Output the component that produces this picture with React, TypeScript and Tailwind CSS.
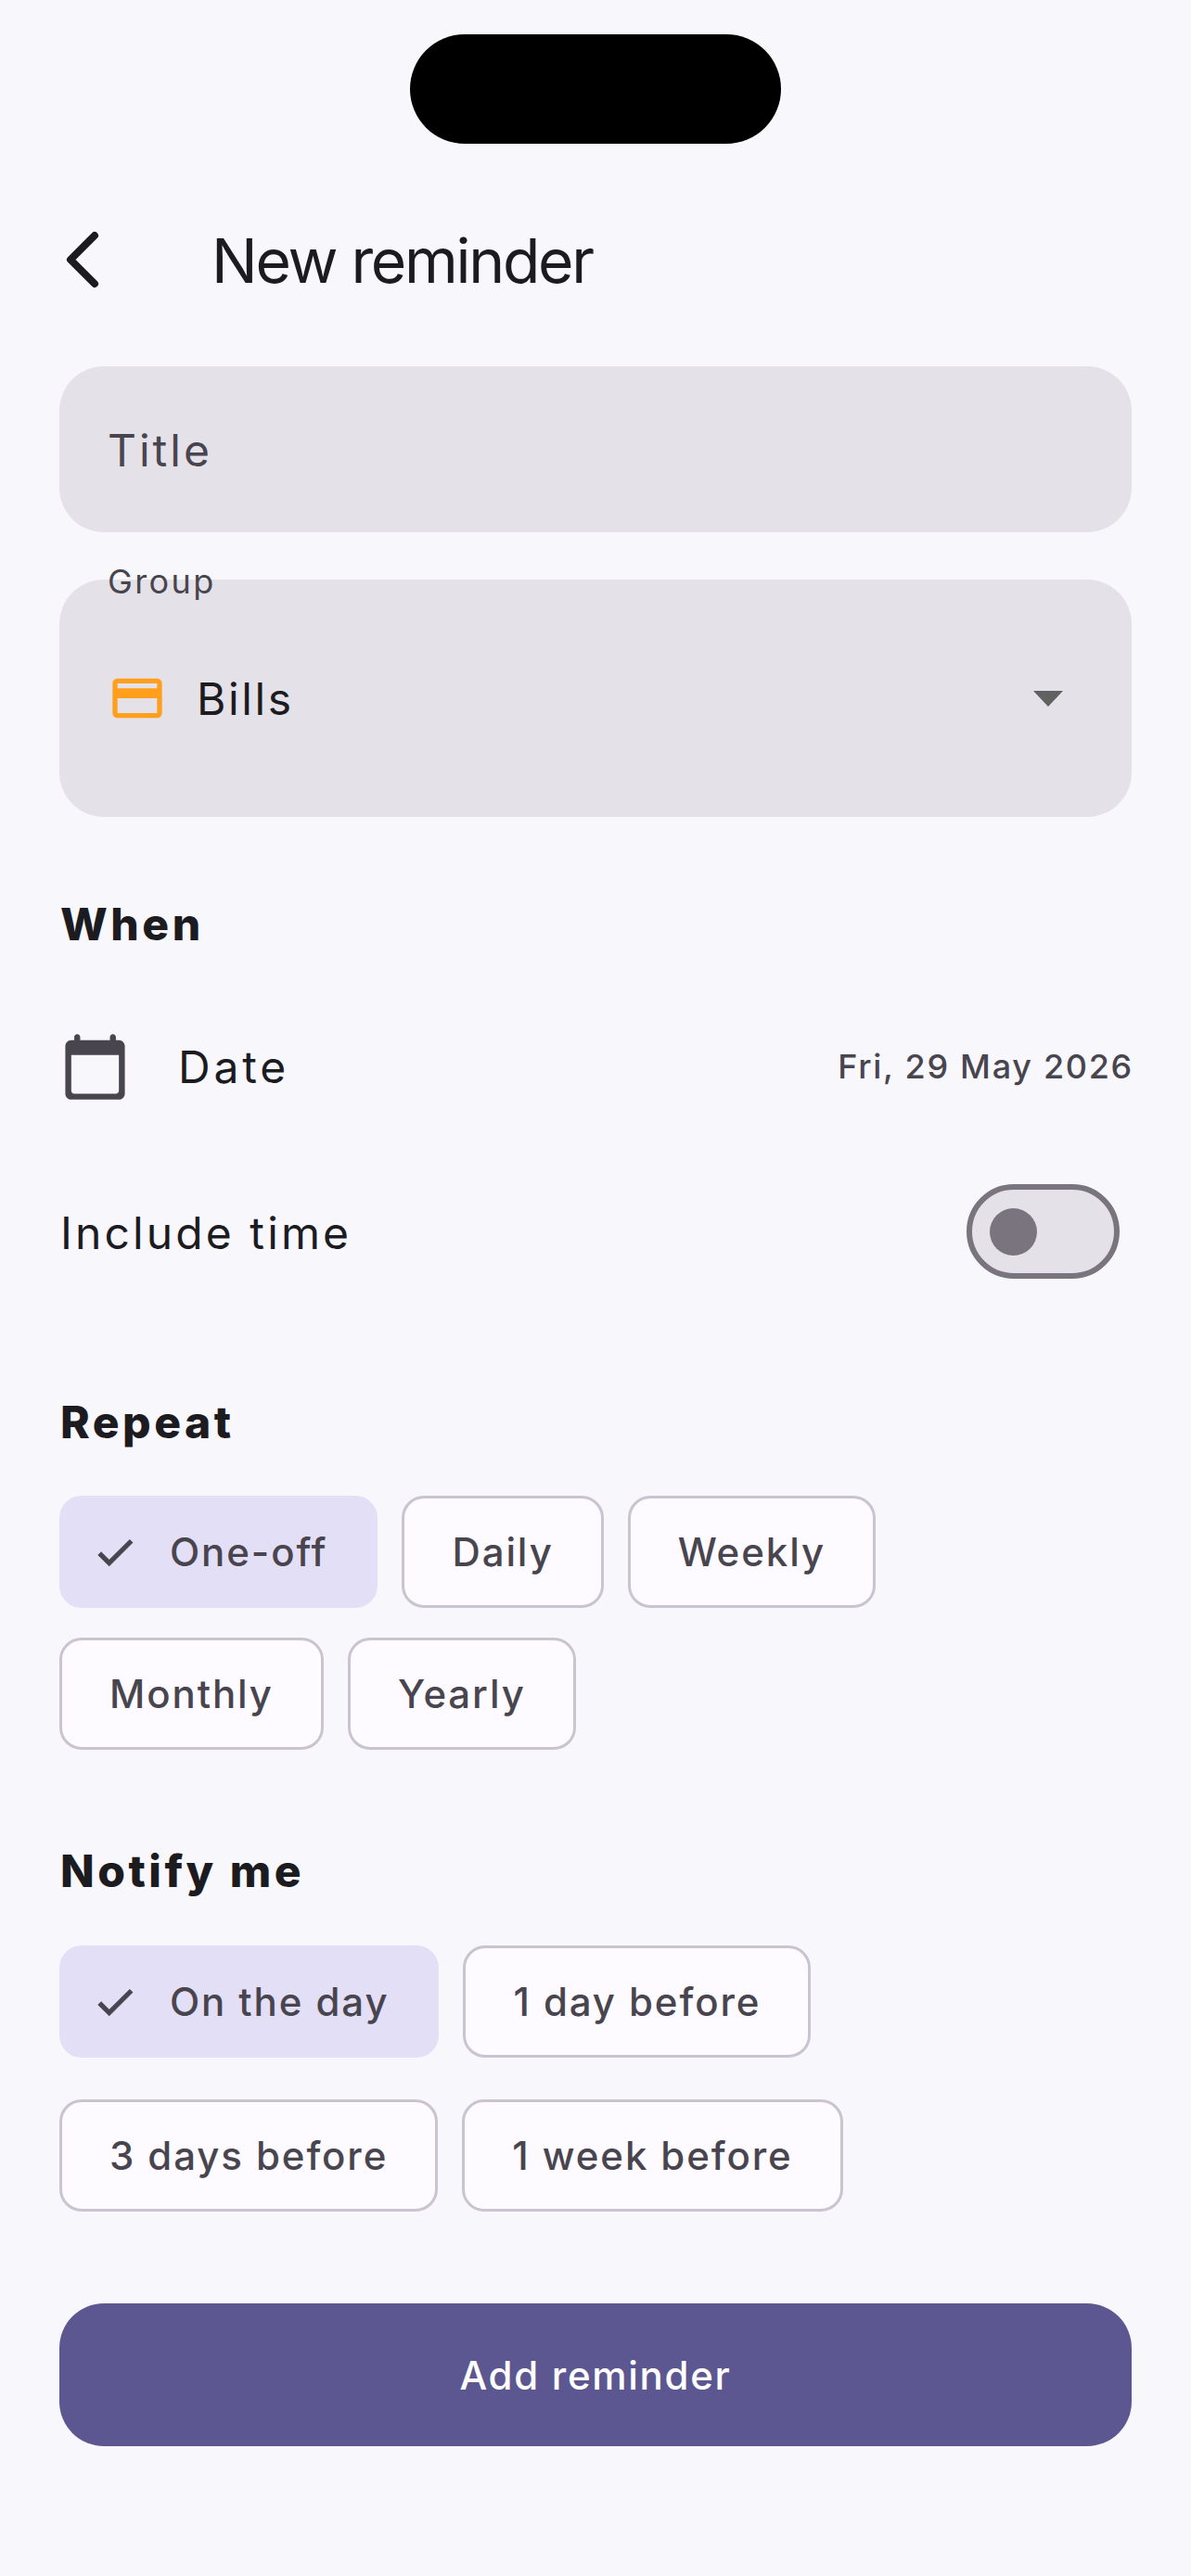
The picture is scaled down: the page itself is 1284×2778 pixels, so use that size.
import React from 'react';

const FONT = "font-['Inter','Noto_Sans',sans-serif]";

const CheckIcon = () => (
  <svg viewBox="0 0 24 24" className="w-[50px] h-[50px] fill-[#49454f] stroke-[#49454f] stroke-[0.5px] shrink-0">
    <path d="M9 16.17L4.83 12l-1.42 1.41L9 19 21 7l-1.41-1.41z" />
  </svg>
);

const Chip = ({ label, selected }: { label: string; selected?: boolean }) => {
  if (selected) {
    return (
      <div className="h-[121px] flex items-center pl-[35px] pr-[54px] rounded-[24px] bg-[#e3dff7]">
        <CheckIcon />
        <span className="ml-[34px] text-[42px] font-[450] tracking-[1.9px] text-[#49454f]">{label}</span>
      </div>
    );
  }
  return (
    <div className="h-[121px] flex items-center px-[51px] rounded-[24px] border-[3px] border-[#cac4d0] bg-[#fdfbff]">
      <span className="text-[42px] font-[450] tracking-[1.9px] text-[#49454f]">{label}</span>
    </div>
  );
};

const SectionTitle = ({ children, className }: { children: React.ReactNode; className: string }) => (
  <h2 className={`h-[58px] flex items-center pl-[1px] text-[48px] font-extrabold tracking-[3.5px] text-[#1c1b1f] ${className}`}>{children}</h2>
);

export default function App() {
  return (
    <div className={`${FONT} w-[1284px] h-[2778px] bg-[#f8f7fc] overflow-hidden`}>
      <div className="pt-[37px] flex justify-center">
        <div className="w-[400px] h-[118px] bg-black rounded-[59px]" />
      </div>

      <div className="px-[64px]">
        <div className="mt-[75px] h-[100px] flex items-center">
          <svg viewBox="0 0 36 62" className="w-[36px] h-[62px] ml-[7px] shrink-0" fill="none" stroke="#1c1b1f" strokeWidth="8" strokeLinecap="round" strokeLinejoin="round">
            <path d="M31 5L5 31l26 26" />
          </svg>
          <h1 className="ml-[121px] mt-[3px] text-[66px] font-normal tracking-[-2.3px] text-[#1c1b1f]">New reminder</h1>
        </div>

        <div className="mt-[65px] h-[179px] flex items-center px-[52px] rounded-[48px] bg-[#e4e1e8]">
          <span className="mt-[3px] text-[48px] tracking-[3px] text-[#49454f]">Title</span>
        </div>

        <div className="relative mt-[51px] h-[256px] flex items-center pl-[56px] pr-[74px] rounded-[48px] bg-[#e4e1e8]">
          <span className="absolute left-[52px] top-[-20px] text-[36px] leading-[44px] tracking-[2.4px] text-[#49454f]">Group</span>
          <svg viewBox="0 0 24 24" className="w-[64px] h-[64px] ml-[-4px] fill-[#ff9f1c] shrink-0">
            <path d="M20 4H4c-1.11 0-1.99.89-1.99 2L2 18c0 1.11.89 2 2 2h16c1.11 0 2-.89 2-2V6c0-1.11-.89-2-2-2zm0 14H4v-6h16v6zm0-10H4V6h16v2z" />
          </svg>
          <span className="ml-[32px] mt-[2px] text-[48px] tracking-[2.6px] text-[#1c1b1f]">Bills</span>
          <svg viewBox="0 0 32 17" className="ml-auto w-[32px] h-[17px] fill-[#616161] shrink-0">
            <path d="M0 0h32L16 17z" />
          </svg>
        </div>

        <SectionTitle className="mt-[87px]">When</SectionTitle>

        <div className="mt-[74px] h-[100px] flex items-center">
          <svg viewBox="0 0 24 24" className="w-[77px] h-[77px] fill-[#49454f] shrink-0">
            <path d="M20 3h-1V2c0-.55-.45-1-1-1s-1 .45-1 1v1H7V2c0-.55-.45-1-1-1s-1 .45-1 1v1H4c-1.1 0-2 .9-2 2v16c0 1.1.9 2 2 2h16c1.1 0 2-.9 2-2V5c0-1.1-.9-2-2-2zm-1 18H5c-.55 0-1-.45-1-1V8h16v12c0 .55-.45 1-1 1z" />
          </svg>
          <span className="ml-[51px] mt-[2px] text-[48px] tracking-[3.8px] text-[#1c1b1f]">Date</span>
          <span className="ml-auto mr-[-2px] text-[36px] font-medium tracking-[1.7px] text-[#49454f]">Fri, 29 May 2026</span>
        </div>

        <div className="mt-[77px] h-[102px] flex items-center justify-between pr-[13px]">
          <span className="ml-[1px] mt-[3px] text-[48px] tracking-[3.1px] text-[#1c1b1f]">Include time</span>
          <div className="w-[165px] h-[102px] flex items-center pl-[19px] rounded-full border-[6px] border-[#79747e] bg-[#e4e1e8]">
            <div className="w-[51px] h-[51px] rounded-full bg-[#79747e]" />
          </div>
        </div>

        <SectionTitle className="mt-[126px]">Repeat</SectionTitle>
        <div className="mt-[50px] flex flex-col gap-y-[32px]">
          <div className="flex gap-x-[26px]">
            <Chip label="One-off" selected />
            <Chip label="Daily" />
            <Chip label="Weekly" />
          </div>
          <div className="flex gap-x-[26px]">
            <Chip label="Monthly" />
            <Chip label="Yearly" />
          </div>
        </div>

        <SectionTitle className="mt-[102px]">Notify me</SectionTitle>
        <div className="mt-[51px] flex flex-col gap-y-[45px]">
          <div className="flex gap-x-[26px]">
            <Chip label="On the day" selected />
            <Chip label="1 day before" />
          </div>
          <div className="flex gap-x-[26px]">
            <Chip label="3 days before" />
            <Chip label="1 week before" />
          </div>
        </div>

        <button className="mt-[99px] w-full h-[154px] rounded-[48px] bg-[#5c5691] text-white text-[42px] font-[450] tracking-[1.7px]">
          Add reminder
        </button>
      </div>
    </div>
  );
}
